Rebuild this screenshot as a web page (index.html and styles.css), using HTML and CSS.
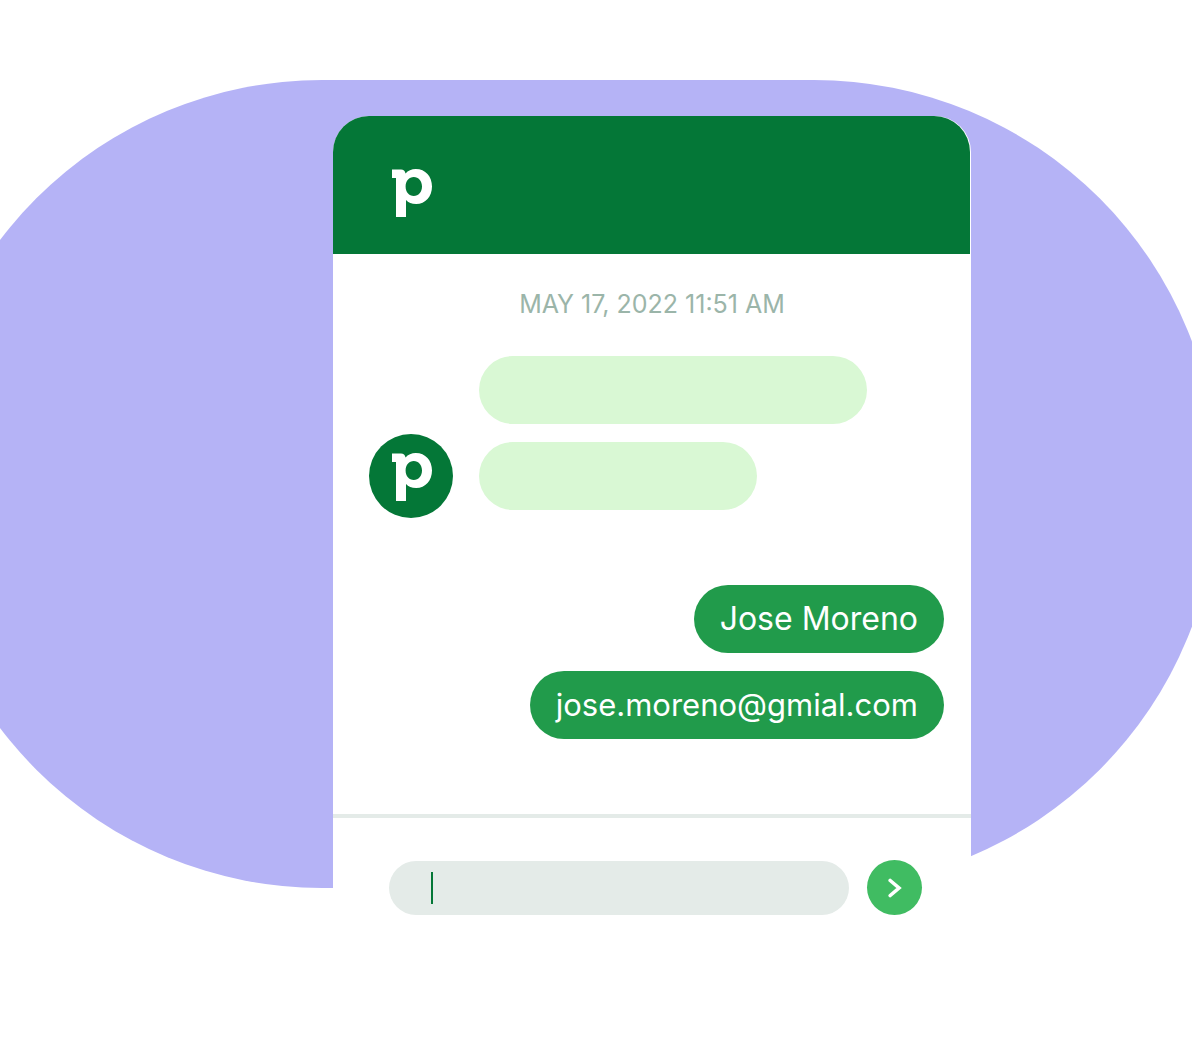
FILE: index.html
```html
<!DOCTYPE html>
<html lang="en">
<head>
<meta charset="utf-8">
<meta name="viewport" content="width=device-width, initial-scale=1">
<title>Chat</title>
<link rel="stylesheet" href="styles.css">
</head>
<body>
<svg class="symbols" aria-hidden="true">
  <symbol id="logo" viewBox="0 0 40 48">
    <path fill="currentColor" fill-rule="evenodd" d="M0 .5H9C11.500 .5 13 1.800 13.500 4.500C16 1.500 19.500 0 23.800 0C33.500 0 40 7.500 40 17.500C40 27.500 33.500 35 24.200 35C19.600 35 16.300 33.500 14 31V48H4V9H0ZM21.800 8C17 8 13.600 12 13.600 17.500C13.600 23 17 27 21.800 27C26.500 27 30 23 30 17.500C30 12 26.500 8 21.800 8Z"/>
  </symbol>
</svg>
<main class="scene">
  <div class="backdrop"></div>
  <section class="chat" aria-label="Chat">
    <header class="chat-header">
      <svg class="logo" role="img" aria-label="p"><use href="#logo"/></svg>
    </header>
    <div class="messages">
      <time class="date" datetime="2022-05-17T11:51">MAY 17, 2022 11:51 AM</time>
      <div class="incoming">
        <div class="avatar"><svg class="logo" role="img" aria-label="p"><use href="#logo"/></svg></div>
        <div class="bubbles">
          <div class="placeholder long"></div>
          <div class="placeholder short"></div>
        </div>
      </div>
      <div class="outgoing">
        <p class="bubble name">Jose Moreno</p>
        <p class="bubble email">jose.moreno@gmial.com</p>
      </div>
    </div>
    <form class="composer">
      <div class="field">
        <span class="caret"></span>
        <input class="input" type="text" aria-label="Message">
      </div>
      <button class="send" type="button" aria-label="Send">
        <svg class="chevron" viewBox="0 0 14 20" aria-hidden="true"><path d="M2.200 2.500L11 10L2.200 17.500" fill="none" stroke="currentColor" stroke-width="3.600" stroke-linecap="round" stroke-linejoin="miter"/></svg>
      </button>
    </form>
  </section>
</main>
</body>
</html>
```
FILE: styles.css
```css
* {
  box-sizing: border-box;
}

body {
  margin: 0;
  background: #fff;
  font-family: Inter, "Liberation Sans", sans-serif;
}

.symbols {
  display: none;
}

.scene {
  display: grid;
  grid-template-columns: minmax(0, 333fr) minmax(0, 638fr) minmax(0, 221fr);
  align-items: start;
  min-height: 100vh;
  padding-top: 80px;
  overflow: hidden;
}

.backdrop {
  grid-area: 1 / 1 / 2 / 4;
  height: 808px;
  margin: 0 -26px 0 -82px;
  border-radius: 404px;
  background: #b5b3f6;
}

.chat {
  grid-area: 1 / 2 / 2 / 3;
  align-self: stretch;
  margin-top: 36px;
  border-radius: 36px 36px 0 0;
  background: #fff;
}

.chat-header {
  height: 138px;
  margin-right: 1px;
  padding: 53px 59px;
  border-radius: 36px 36px 0 0;
  background: #047737;
  color: #fff;
}

.logo {
  display: block;
  width: 40px;
  height: 48px;
}

.messages {
  display: flex;
  flex-direction: column;
  padding: 34px 27px 75px 36px;
}

.date {
  align-self: center;
  margin-left: -9px;
  font-size: 25px;
  line-height: 32px;
  color: #9bb5a9;
}

.incoming {
  display: flex;
  align-items: flex-end;
  gap: 26px;
  margin-top: 36px;
}

.avatar {
  display: flex;
  justify-content: flex-end;
  width: 84px;
  height: 84px;
  margin-bottom: -8px;
  padding: 19px 21px 0 0;
  border-radius: 50%;
  background: #047737;
  color: #fff;
}

.bubbles {
  display: flex;
  flex: 1;
  flex-direction: column;
  gap: 18px;
}

.placeholder {
  max-width: 100%;
  height: 68px;
  border-radius: 34px;
  background: #d9f8d4;
}

.long {
  width: 388px;
}

.short {
  width: 278px;
}

.outgoing {
  display: flex;
  flex-direction: column;
  align-items: flex-end;
  gap: 18px;
  margin-top: 75px;
}

.bubble {
  margin: 0;
  padding: 0 26px;
  border-radius: 34px;
  background: #219b4b;
  color: #fff;
  line-height: 68px;
}

.name {
  font-size: 32px;
}

.email {
  font-size: 31px;
}

.composer {
  display: flex;
  align-items: center;
  gap: 18px;
  padding: 42px 49px 0 56px;
  border-top: 4px solid #e4ebe8;
}

.field {
  display: flex;
  flex: 1;
  align-items: center;
  min-width: 0;
  height: 54px;
  padding: 0 27px 0 42px;
  border-radius: 27px;
  background: #e4ebe8;
}

.caret {
  width: 2px;
  height: 32px;
  background: #047737;
}

.input {
  flex: 1;
  min-width: 0;
  border: 0;
  outline: 0;
  background: transparent;
  font: inherit;
  font-size: 25px;
  color: #047737;
}

.send {
  display: grid;
  flex: none;
  place-items: center;
  width: 55px;
  height: 55px;
  padding: 0;
  border: 0;
  border-radius: 50%;
  background: #40bc62;
  color: #fff;
}

.chevron {
  width: 14px;
  height: 20px;
}
```
